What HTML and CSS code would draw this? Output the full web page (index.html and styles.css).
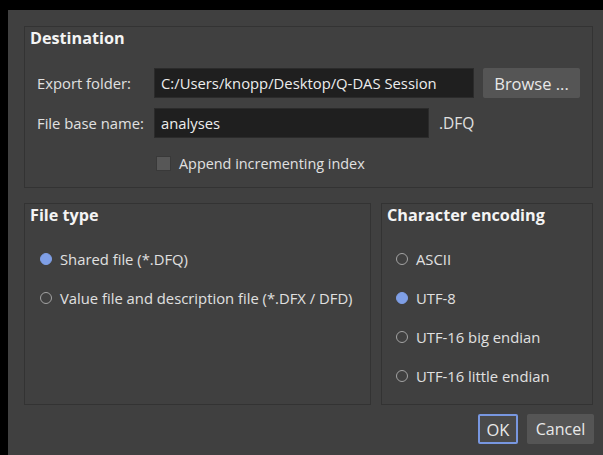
FILE: index.html
```html
<!DOCTYPE html>
<html lang="en">
<head>
<meta charset="utf-8">
<title>Export</title>
<link rel="stylesheet" href="styles.css">
</head>
<body>
<div class="dialog">
  <fieldset class="group dest">
    <div class="group-title">Destination</div>
    <div class="dest-grid">
      <label class="label">Export folder:</label>
      <div class="field-row">
        <div class="input wide">C:/Users/knopp/Desktop/Q-DAS Session</div>
        <button class="btn browse">Browse ...</button>
      </div>
      <label class="label">File base name:</label>
      <div class="field-row">
        <div class="input narrow">analyses</div>
        <span class="suffix">.DFQ</span>
      </div>
      <span></span>
      <div class="field-row check-row">
        <span class="checkbox"></span>
        <span class="check-text">Append incrementing index</span>
      </div>
    </div>
  </fieldset>

  <div class="lower">
    <fieldset class="group filetype">
      <div class="group-title">File type</div>
      <div class="options">
        <div class="option"><span class="radio on"></span><span>Shared file (*.DFQ)</span></div>
        <div class="option"><span class="radio"></span><span>Value file and description file (*.DFX / DFD)</span></div>
      </div>
    </fieldset>
    <fieldset class="group encoding">
      <div class="group-title">Character encoding</div>
      <div class="options">
        <div class="option"><span class="radio"></span><span>ASCII</span></div>
        <div class="option"><span class="radio on"></span><span>UTF-8</span></div>
        <div class="option"><span class="radio"></span><span>UTF-16 big endian</span></div>
        <div class="option"><span class="radio"></span><span>UTF-16 little endian</span></div>
      </div>
    </fieldset>
  </div>

  <div class="actions">
    <button class="btn ok">OK</button>
    <button class="btn cancel">Cancel</button>
  </div>
</div>
</body>
</html>
```

FILE: styles.css
```css
html, body {
  margin: 0;
  padding: 0;
  background: #000;
}

body {
  padding: 10px 0 0 8px;
  font-family: "Open Sans", "Noto Sans", sans-serif;
  font-size: 14.8px;
  color: #e0e0e0;
}

.dialog {
  background: #404040;
  height: 445px;
  box-sizing: border-box;
  padding: 16px 10px 0 16px;
  display: flex;
  flex-direction: column;
}

.group {
  margin: 0;
  padding: 0;
  border: 1px solid #333333;
  min-width: 0;
  box-sizing: border-box;
}

.group-title {
  font-weight: 700;
  font-size: 16.2px;
  color: #f4f4f4;
  line-height: 20px;
  padding: 1px 0 0 5px;
  white-space: nowrap;
}

.dest {
  height: 162px;
}

.dest-grid {
  display: grid;
  grid-template-columns: 117px 1fr;
  grid-auto-rows: 30px;
  row-gap: 10px;
  margin-top: 20px;
  padding-left: 12px;
}

.label {
  display: flex;
  align-items: center;
  white-space: nowrap;
}

.field-row {
  display: flex;
  align-items: center;
}

.input {
  height: 30px;
  box-sizing: border-box;
  background: #1f1f1f;
  border: 1px solid #2b2b2b;
  color: #ededed;
  padding-left: 6px;
  display: flex;
  align-items: center;
  white-space: nowrap;
}

.input.wide { width: 320px; }
.input.narrow { width: 275px; }

.suffix {
  margin-left: 10px;
  font-size: 15.5px;
}

.btn {
  font: inherit;
  color: #e8e8e8;
  background: #555555;
  border: 0;
  border-radius: 2px;
  height: 30px;
  padding: 0;
}

.browse {
  width: 97px;
  margin-left: 9px;
  font-size: 16.5px;
}

.check-row {
  padding-left: 2px;
}

.checkbox {
  width: 15px;
  height: 15px;
  box-sizing: border-box;
  background: #575757;
  border: 1px solid #393939;
}

.check-text {
  margin-left: 8px;
  font-size: 14.4px;
}

.lower {
  display: flex;
  gap: 10px;
  margin-top: 15px;
  height: 202px;
}

.filetype {
  width: 347px;
}

.encoding {
  flex: 1;
}

.options {
  display: flex;
  flex-direction: column;
  gap: 15px;
  margin-top: 22px;
}

.option {
  height: 24px;
  display: flex;
  align-items: center;
  gap: 8px;
  white-space: nowrap;
}

.filetype .option { padding-left: 15px; }
.encoding .option { padding-left: 14px; }

.radio {
  width: 12px;
  height: 12px;
  box-sizing: border-box;
  border-radius: 50%;
  border: 1.5px solid #a3a3a3;
  flex: none;
}

.radio.on {
  background: #7f9fe6;
  border-color: #7f9fe6;
}

.actions {
  display: flex;
  justify-content: flex-end;
  gap: 9px;
  margin-top: 9px;
  margin-right: -1px;
}

.ok {
  width: 40px;
  box-sizing: border-box;
  border: 2px solid #7897e0;
  background: #4a4a4a;
  font-size: 16.5px;
}

.cancel {
  width: 67px;
  font-size: 16px;
}
```
